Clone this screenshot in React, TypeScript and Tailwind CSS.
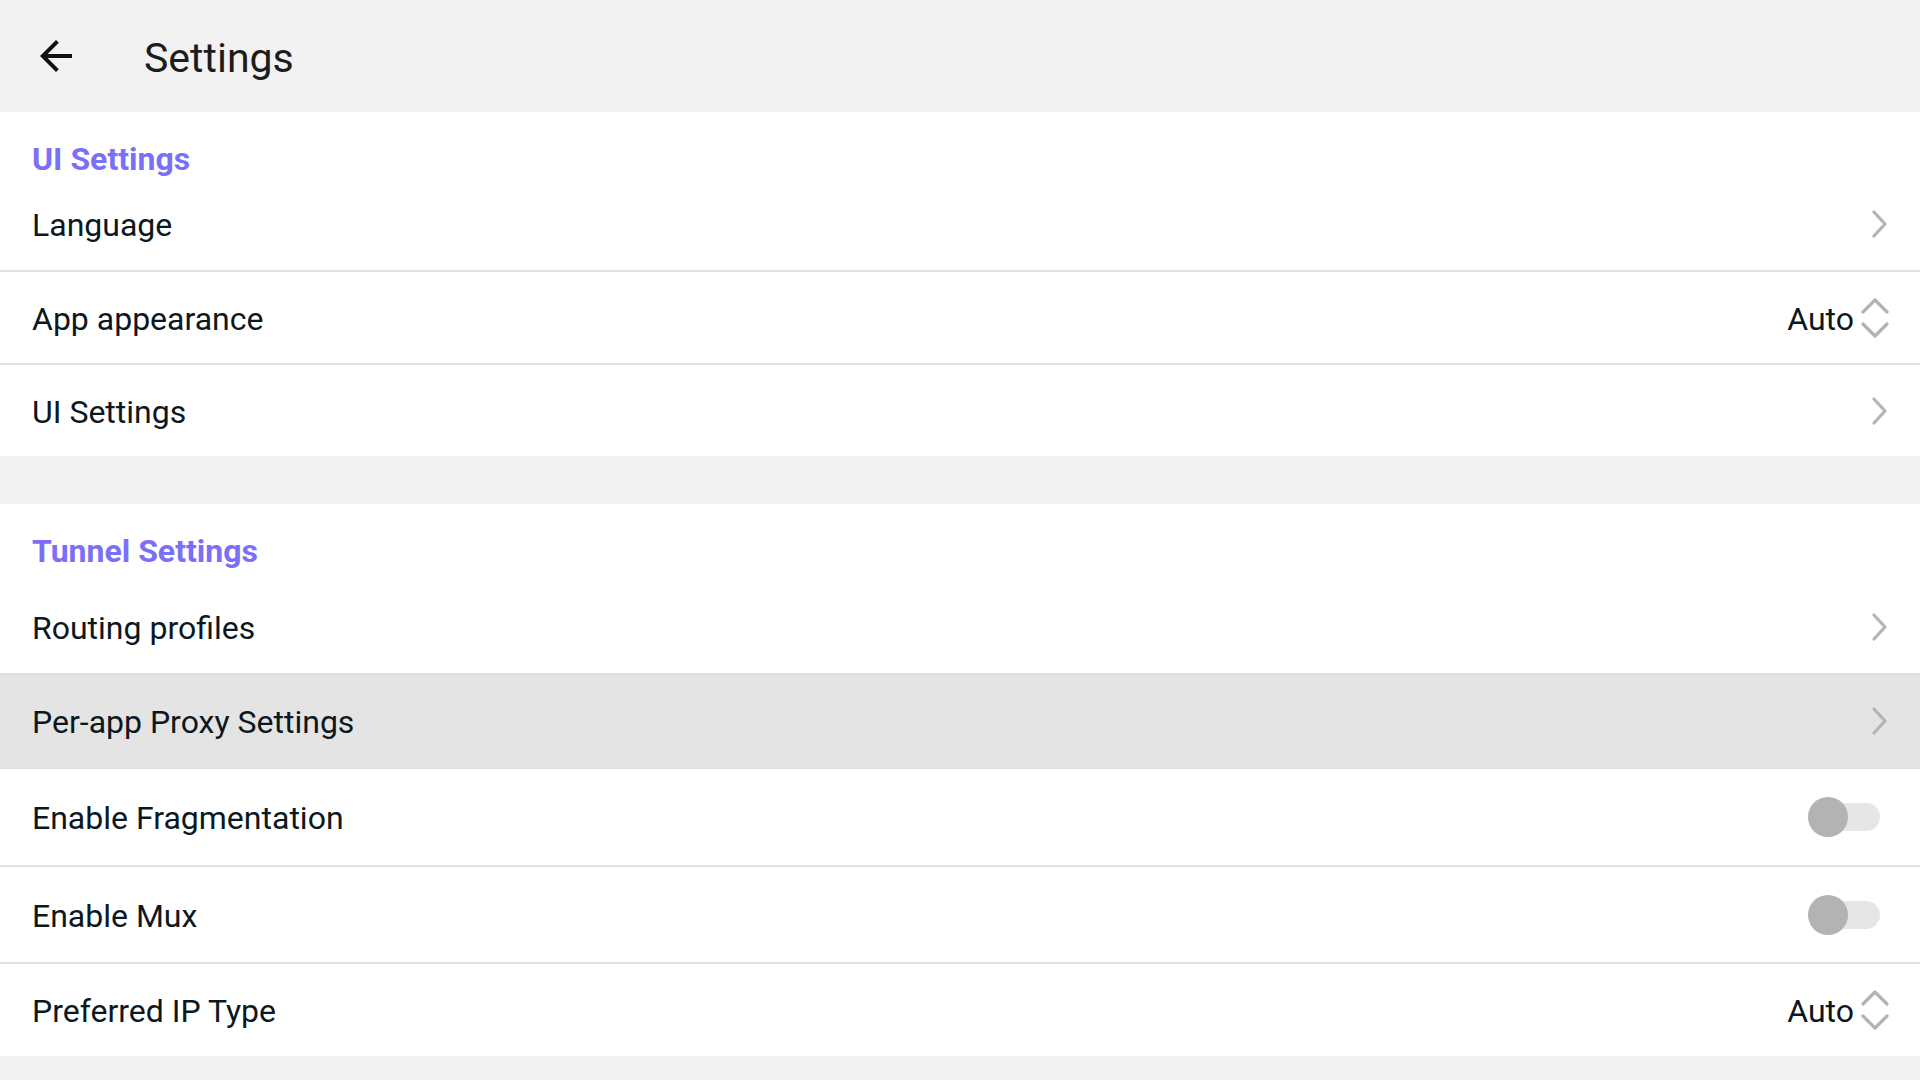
import React from "react";

const font = { fontFamily: "Roboto, 'Noto Sans', sans-serif" };

function ChevronRight() {
  return (
    <svg width="18" height="28" viewBox="0 0 18 28" className="mr-[31px]">
      <polyline points="3,2 14,14 3,26" fill="none" stroke="#b4b4b4" strokeWidth="3.2" strokeLinecap="round" strokeLinejoin="round" />
    </svg>
  );
}

function UpDown() {
  return (
    <svg width="28" height="42" viewBox="0 0 28 42" className="ml-[7px] mr-[31px]">
      <polyline points="2,15 14,3 26,15" fill="none" stroke="#b4b4b4" strokeWidth="3.2" strokeLinecap="round" strokeLinejoin="round" />
      <polyline points="2,27 14,39 26,27" fill="none" stroke="#b4b4b4" strokeWidth="3.2" strokeLinecap="round" strokeLinejoin="round" />
    </svg>
  );
}

function Toggle() {
  return (
    <div className="relative w-[72px] h-[40px] mr-[40px]">
      <div className="absolute right-0 top-[6px] w-[60px] h-[28px] rounded-full bg-[#e6e6e6]" />
      <div className="absolute left-0 top-0 w-[40px] h-[40px] rounded-full bg-[#b3b3b3]" />
    </div>
  );
}

function Divider() {
  return <div className="h-[2px] bg-[#dfe0e3]" />;
}

function Row({ label, h, right, bg = "bg-white" }: { label: string; h: string; right: React.ReactNode; bg?: string }) {
  return (
    <div className={`flex items-center justify-between ${h} ${bg} pl-[32px]`}>
      <span className="pt-[2px] text-[32px] leading-[32px] text-[#0c1821]">{label}</span>
      {right}
    </div>
  );
}

function Auto() {
  return (
    <div className="flex items-center">
      <span className="pt-[2px] text-[32px] leading-[32px] text-[#0c1821]">Auto</span>
      <UpDown />
    </div>
  );
}

export default function App() {
  return (
    <div className="w-[1920px] h-[1080px] bg-[#f2f2f2] overflow-hidden" style={font}>
      <div className="h-[112px] flex items-center bg-[#f2f2f2]">
        <svg width="48" height="48" viewBox="0 0 24 24" className="ml-[32px]">
          <path d="M20 11H7.83l5.59-5.59L12 4l-8 8 8 8 1.41-1.41L7.83 13H20v-2z" fill="#111111" />
        </svg>
        <span className="ml-[64px] pt-[5px] text-[41px] leading-[41px] text-[#1c1c1c]">Settings</span>
      </div>

      <div className="bg-white">
        <div className="h-[66px] pt-[31px] pl-[32px]">
          <span className="block text-[32px] leading-[32px] font-bold text-[#7b6ff8]">UI Settings</span>
        </div>
        <Row label="Language" h="h-[92px]" right={<ChevronRight />} />
        <Divider />
        <Row label="App appearance" h="h-[91px]" right={<Auto />} />
        <Divider />
        <Row label="UI Settings" h="h-[91px]" right={<ChevronRight />} />
      </div>

      <div className="h-[48px]" />

      <div className="bg-white">
        <div className="h-[77px] pt-[31px] pl-[32px]">
          <span className="block text-[32px] leading-[32px] font-bold text-[#7b6ff8]">Tunnel Settings</span>
        </div>
        <Row label="Routing profiles" h="h-[92px]" right={<ChevronRight />} />
        <Divider />
        <Row label="Per-app Proxy Settings" h="h-[92px]" bg="bg-[#e4e4e4]" right={<ChevronRight />} />
        <Divider />
        <Row label="Enable Fragmentation" h="h-[96px]" right={<Toggle />} />
        <Divider />
        <Row label="Enable Mux" h="h-[95px]" right={<Toggle />} />
        <Divider />
        <Row label="Preferred IP Type" h="h-[92px]" right={<Auto />} />
      </div>
    </div>
  );
}
